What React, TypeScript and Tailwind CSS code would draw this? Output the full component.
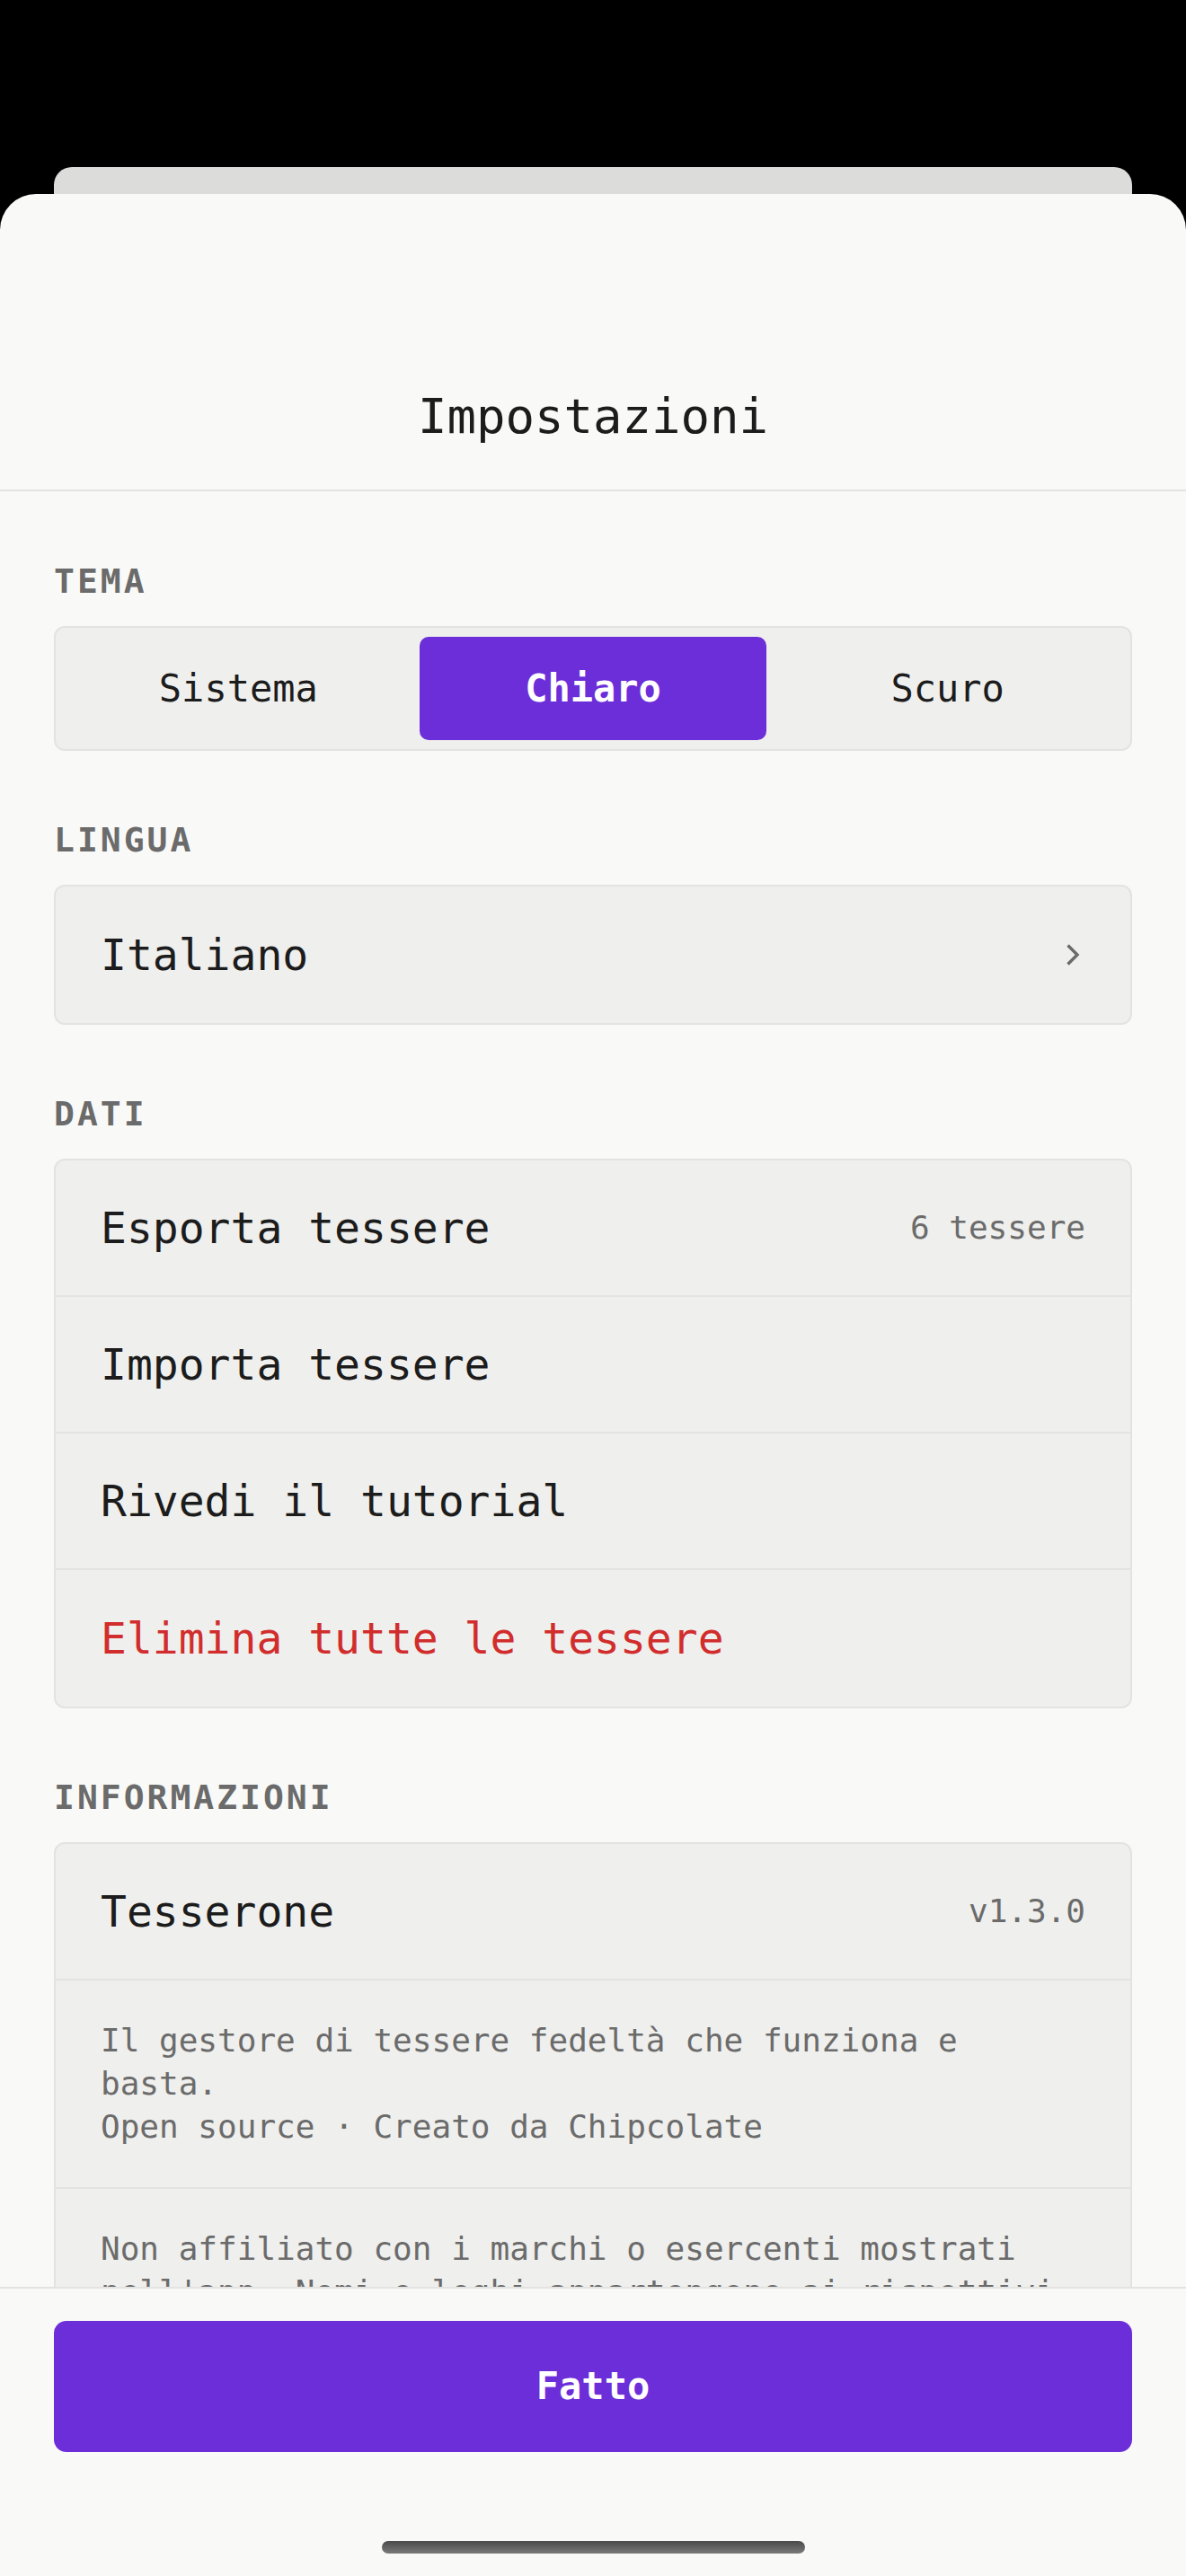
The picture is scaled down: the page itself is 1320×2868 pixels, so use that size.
import React from 'react';

const mono = "font-['DejaVu_Sans_Mono','Liberation_Mono',monospace]";

type RowProps = {
  label: string;
  value?: string;
  danger?: boolean;
  chevron?: boolean;
};

function Row({ label, value, danger, chevron }: RowProps) {
  return (
    <div className="flex h-[152px] items-center justify-between px-[50px]">
      <span className={`text-[48px] leading-none ${danger ? 'text-[#d12d2d]' : 'text-[#1c1c1c]'}`}>
        {label}
      </span>
      {value && <span className="text-[36px] leading-none text-[#6b6b6b]">{value}</span>}
      {chevron && (
        <svg width="16" height="24" viewBox="0 0 16 24" fill="none" className="mr-[6px]">
          <path d="M2.5 1.5 L13 12 L2.5 22.5" stroke="#6b6b6b" strokeWidth="3.4" />
        </svg>
      )}
    </div>
  );
}

function Section({ title, children }: { title: string; children: React.ReactNode }) {
  return (
    <section>
      <h2 className="mb-[31px] text-[38px] font-bold leading-none tracking-[3px] text-[#6b6b6b]">{title}</h2>
      {children}
    </section>
  );
}

function Card({ children }: { children: React.ReactNode }) {
  return (
    <div className="overflow-hidden rounded-[12px] border-2 border-[#e3e3e1] bg-[#efefed] divide-y-2 divide-[#e3e3e1]">
      {children}
    </div>
  );
}

export default function App() {
  const themes = ['Sistema', 'Chiaro', 'Scuro'];
  const active = 'Chiaro';

  return (
    <div className={`flex h-[2868px] w-[1320px] flex-col overflow-hidden bg-black pt-[186px] ${mono}`}>
      {/* sheet stacked behind */}
      <div className="mx-[60px] h-[30px] shrink-0 rounded-t-[20px] bg-[#dcdcdb]" />

      <div className="flex min-h-0 flex-1 flex-col rounded-t-[40px] bg-[#f9f9f7]">
        <header className="flex h-[331px] shrink-0 items-end justify-center border-b-2 border-[#e3e3e1] pb-[54px]">
          <h1 className="text-[54px] font-medium leading-none text-[#1c1c1c]">Impostazioni</h1>
        </header>

        <div className="flex min-h-0 flex-1 flex-col gap-[80px] overflow-hidden px-[60px] pt-[81px]">
          <Section title="TEMA">
            <div className="grid grid-cols-3 gap-2 rounded-[12px] border-2 border-[#e3e3e1] bg-[#efefed] p-[10px]">
              {themes.map((t) => (
                <div
                  key={t}
                  className={`flex h-[115px] items-center justify-center rounded-[10px] text-[42px] leading-none ${
                    t === active ? 'bg-[#6c2ed8] font-bold text-white' : 'text-[#1c1c1c]'
                  }`}
                >
                  {t}
                </div>
              ))}
            </div>
          </Section>

          <Section title="LINGUA">
            <Card>
              <Row label="Italiano" chevron />
            </Card>
          </Section>

          <Section title="DATI">
            <Card>
              <Row label="Esporta tessere" value="6 tessere" />
              <Row label="Importa tessere" />
              <Row label="Rivedi il tutorial" />
              <Row label="Elimina tutte le tessere" danger />
            </Card>
          </Section>

          <Section title="INFORMAZIONI">
            <Card>
              <Row label="Tesserone" value="v1.3.0" />
              <div className="px-[50px] py-[43px] text-[36px] leading-[48px] text-[#6b6b6b]">
                <p>Il gestore di tessere fedeltà che funziona e basta.</p>
                <p>Open source · Creato da Chipcolate</p>
              </div>
              <div className="px-[50px] py-[43px] text-[36px] leading-[48px] text-[#6b6b6b]">
                <p>
                  Non affiliato con i marchi o esercenti mostrati nell'app. Nomi e loghi appartengono ai
                  rispettivi proprietari.
                </p>
              </div>
            </Card>
          </Section>
        </div>

        <footer className="flex h-[322px] shrink-0 flex-col border-t-2 border-[#e3e3e1] bg-[#f9f9f7] px-[60px] pt-[36px]">
          <button className="h-[146px] w-full rounded-[14px] bg-[#6c2ed8] text-[42px] font-bold leading-none text-white">
            Fatto
          </button>
          <div className="mx-auto mt-[99px] h-[14px] w-[471px] rounded-full bg-gradient-to-b from-[#4a4a4a] to-[#7a7a7a]" />
        </footer>
      </div>
    </div>
  );
}
